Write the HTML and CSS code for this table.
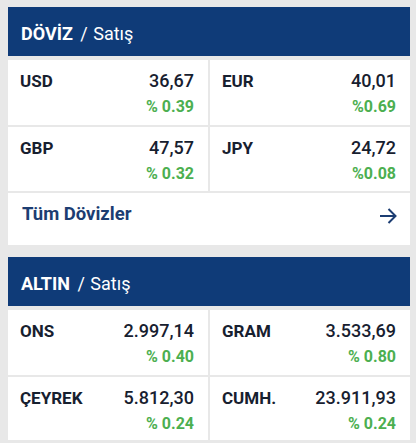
FILE: index.html
```html
<!DOCTYPE html>
<html lang="tr">
<head>
<meta charset="utf-8">
<link rel="stylesheet" href="styles.css">
</head>
<body>
<div class="page">
  <section class="card">
    <div class="card-head"><b>DÖVİZ</b> / Satış</div>
    <div class="grid">
      <div class="cell"><div class="line"><span class="lbl">USD</span><span class="val">36,67</span></div><div class="chg">% 0.39</div></div>
      <div class="cell"><div class="line"><span class="lbl">EUR</span><span class="val">40,01</span></div><div class="chg">%0.69</div></div>
      <div class="cell"><div class="line"><span class="lbl">GBP</span><span class="val">47,57</span></div><div class="chg">% 0.32</div></div>
      <div class="cell"><div class="line"><span class="lbl">JPY</span><span class="val">24,72</span></div><div class="chg">%0.08</div></div>
    </div>
    <a class="more" href="#"><span>Tüm Dövizler</span>
      <svg class="arrow" width="18" height="16" viewBox="0 0 18 16"><path d="M1 8H16.5M9.5 1L16.5 8L9.5 15" fill="none" stroke="#1c3d72" stroke-width="2"/></svg>
    </a>
  </section>
  <section class="card">
    <div class="card-head"><b>ALTIN</b> / Satış</div>
    <div class="grid">
      <div class="cell"><div class="line"><span class="lbl">ONS</span><span class="val">2.997,14</span></div><div class="chg">% 0.40</div></div>
      <div class="cell"><div class="line"><span class="lbl">GRAM</span><span class="val">3.533,69</span></div><div class="chg">% 0.80</div></div>
      <div class="cell"><div class="line"><span class="lbl">ÇEYREK</span><span class="val">5.812,30</span></div><div class="chg">% 0.24</div></div>
      <div class="cell"><div class="line"><span class="lbl">CUMH.</span><span class="val">23.911,93</span></div><div class="chg">% 0.24</div></div>
    </div>
  </section>
</div>
</body>
</html>
```

FILE: styles.css
```css
* { box-sizing: border-box; }
html, body { margin: 0; padding: 0; }
body {
  background: #e8e8e8;
  font-family: Roboto, "Liberation Sans", sans-serif;
  width: 416px;
  height: 443px;
  overflow: hidden;
}
.page {
  padding: 7px 6px 0 8px;
  display: flex;
  flex-direction: column;
  gap: 12px;
}
.card {
  display: flex;
  flex-direction: column;
}
.card-head {
  background: #0f3b78;
  color: #fff;
  height: 49px;
  padding: 4px 0 0 13px;
  line-height: 45px;
  font-size: 18px;
  font-weight: 400;
  word-spacing: 1px;
}
.card-head b { font-weight: 700; margin-right: 2px; }
.grid {
  margin-top: 4px;
  display: grid;
  grid-template-columns: 1fr 1fr;
  grid-template-rows: 65px 64px;
  gap: 2px;
}
.card:last-child .grid { grid-template-rows: 65px 63px; }
.cell {
  background: #fff;
  padding: 10px 14px 0 12px;
}
.line {
  display: flex;
  justify-content: space-between;
  line-height: 22px;
  color: #17202f;
}
.lbl { font-size: 17px; font-weight: 700; }
.val { font-size: 18px; font-weight: 500; }
.chg {
  margin-top: 4px;
  text-align: right;
  color: #4caf50;
  font-size: 16px;
  font-weight: 700;
  line-height: 22px;
}
.more {
  margin-top: 2px;
  height: 52px;
  background: #fff;
  display: flex;
  justify-content: space-between;
  align-items: flex-start;
  padding: 10px 13px 0 14px;
  text-decoration: none;
  color: #1c3d72;
  font-size: 18.5px;
  font-weight: 700;
  line-height: 22px;
}
.arrow { margin-top: 5px; }
```
